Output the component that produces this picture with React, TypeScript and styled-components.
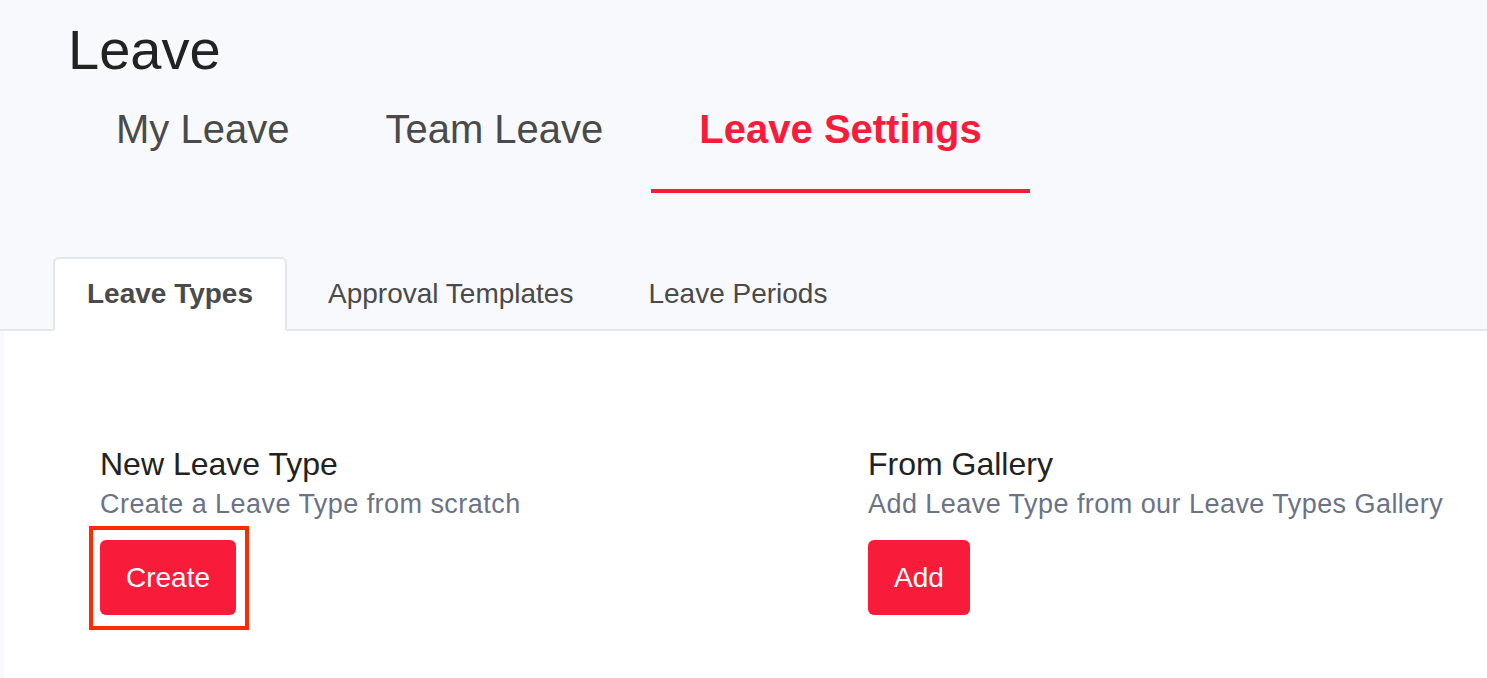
import React from "react";
import styled, { createGlobalStyle } from "styled-components";

const GlobalStyle = createGlobalStyle`
    html, body {
        margin: 0;
        padding: 0;
        background: #f8f9fc;
        font-family: "Liberation Sans", Arial, Helvetica, sans-serif;
    }
    * {
        box-sizing: border-box;
    }
`;

const Page = styled.div`
    min-height: 678px;
    display: flex;
    flex-direction: column;
`;

const Header = styled.header`
    padding-left: 68px;
`;

const Title = styled.h1`
    margin: 18px 0 0;
    font-size: 56px;
    line-height: 64px;
    font-weight: 400;
    color: #222222;
`;

const NavTabs = styled.nav`
    display: flex;
`;

const NavTab = styled.a<{ $active?: boolean }>`
    display: block;
    padding: 23px 48px 36px;
    font-size: 40px;
    line-height: 48px;
    font-weight: ${(p) => (p.$active ? 700 : 400)};
    color: ${(p) => (p.$active ? "#f91b3a" : "#4a4a4a")};
    border-bottom: 4px solid ${(p) => (p.$active ? "#f91b3a" : "transparent")};
    cursor: pointer;
`;

const SubTabs = styled.div`
    display: flex;
    gap: 7px;
    margin-top: 64px;
    padding-left: 53px;
    border-bottom: 2px solid #e4e6ec;
`;

const SubTab = styled.div<{ $active?: boolean }>`
    padding: 19px 32px 19px;
    margin-bottom: -2px;
    font-size: 28px;
    line-height: 32px;
    font-weight: ${(p) => (p.$active ? 700 : 400)};
    color: #4a4a4a;
    background: ${(p) => (p.$active ? "#ffffff" : "transparent")};
    border: 2px solid ${(p) => (p.$active ? "#e4e6ec" : "transparent")};
    border-bottom: 2px solid ${(p) => (p.$active ? "#ffffff" : "transparent")};
    border-radius: 6px 6px 0 0;
    cursor: pointer;
`;

const Panel = styled.section`
    flex: 1;
    margin-left: 4px;
    background: #ffffff;
    padding: 115px 0 0 96px;
    display: grid;
    grid-template-columns: 768px 1fr;
    align-content: start;
`;

const Option = styled.div`
    display: flex;
    flex-direction: column;
    align-items: flex-start;
`;

const OptionTitle = styled.h3`
    margin: 0;
    font-size: 32px;
    line-height: 36px;
    font-weight: 400;
    color: #222222;
`;

const OptionText = styled.p`
    margin: 6px 0 0;
    font-size: 27px;
    line-height: 32px;
    letter-spacing: 0.45px;
    color: #6b7385;
    white-space: nowrap;
`;

const ButtonWrap = styled.div<{ $highlight?: boolean }>`
    position: relative;
    margin-top: 20px;

    ${(p) =>
        p.$highlight &&
        `
        &::after {
            content: "";
            position: absolute;
            top: -14px;
            left: -11px;
            right: -13px;
            bottom: -15px;
            border: 4px solid #ff2a00;
            pointer-events: none;
        }
    `}
`;

const Button = styled.button`
    display: block;
    height: 75px;
    padding: 0 26px;
    border: none;
    border-radius: 6px;
    background: #f91b3a;
    color: #ffffff;
    font-family: inherit;
    font-size: 28px;
    cursor: pointer;
`;

const options = [
    {
        title: "New Leave Type",
        text: "Create a Leave Type from scratch",
        action: "Create",
        highlight: true,
    },
    {
        title: "From Gallery",
        text: "Add Leave Type from our Leave Types Gallery",
        action: "Add",
        highlight: false,
    },
];

const App = () => {
    return (
        <>
            <GlobalStyle />
            <Page>
                <Header>
                    <Title>Leave</Title>
                    <NavTabs>
                        <NavTab>My Leave</NavTab>
                        <NavTab>Team Leave</NavTab>
                        <NavTab $active>Leave Settings</NavTab>
                    </NavTabs>
                </Header>
                <SubTabs>
                    <SubTab $active>Leave Types</SubTab>
                    <SubTab>Approval Templates</SubTab>
                    <SubTab>Leave Periods</SubTab>
                </SubTabs>
                <Panel>
                    {options.map((o) => (
                        <Option key={o.title}>
                            <OptionTitle>{o.title}</OptionTitle>
                            <OptionText>{o.text}</OptionText>
                            <ButtonWrap $highlight={o.highlight}>
                                <Button>{o.action}</Button>
                            </ButtonWrap>
                        </Option>
                    ))}
                </Panel>
            </Page>
        </>
    );
};

export default App;
